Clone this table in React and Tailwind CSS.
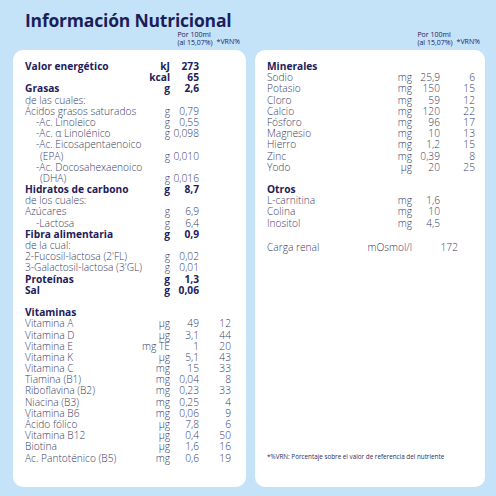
import React from 'react';

const FONT = { fontFamily: '"Open Sans", "Liberation Sans", sans-serif' };

// [label, unit, value, vrn, opts]
const macros = [
  ['Valor energético', 'kJ', '273', '', { b: true }],
  ['', 'kcal', '65', '', { b: true }],
  ['Grasas', 'g', '2,6', '', { b: true }],
  ['de las cuales:'],
  ['Ácidos grasos saturados', 'g', '0,79'],
  ['-Ac. Linoleico', 'g', '0,55', '', { i: 1 }],
  ['-Ac. α Linolénico', 'g', '0,098', '', { i: 1 }],
  ['-Ac. Eicosapentaenoico', '', '', '', { i: 1 }],
  ['(EPA)', 'g', '0,010', '', { i: 2 }],
  ['-Ac. Docosahexaenoico', '', '', '', { i: 1 }],
  ['(DHA)', 'g', '0,016', '', { i: 2 }],
  ['Hidratos de carbono', 'g', '8,7', '', { b: true }],
  ['de los cuales:'],
  ['Azúcares', 'g', '6,9'],
  ['-Lactosa', 'g', '6,4', '', { i: 1 }],
  ['Fibra alimentaria', 'g', '0,9', '', { b: true }],
  ['de la cual:'],
  ['2-Fucosil-lactosa (2\'FL)', 'g', '0,02'],
  ['3-Galactosil-lactosa (3\'GL)', 'g', '0,01'],
  ['Proteínas', 'g', '1,3', '', { b: true }],
  ['Sal', 'g', '0,06', '', { b: true }],
];

const vitamins = [
  ['Vitamina A', 'µg', '49', '12'],
  ['Vitamina D', 'µg', '3,1', '44'],
  ['Vitamina E', 'mg TE', '1', '20'],
  ['Vitamina K', 'µg', '5,1', '43'],
  ['Vitamina C', 'mg', '15', '33'],
  ['Tiamina (B1)', 'mg', '0,04', '8'],
  ['Riboflavina (B2)', 'mg', '0,23', '33'],
  ['Niacina (B3)', 'mg', '0,25', '4'],
  ['Vitamina B6', 'mg', '0,06', '9'],
  ['Ácido fólico', 'µg', '7,8', '6'],
  ['Vitamina B12', 'µg', '0,4', '50'],
  ['Biotina', 'µg', '1,6', '16'],
  ['Ac. Pantoténico (B5)', 'mg', '0,6', '19'],
];

const minerals = [
  ['Sodio', 'mg', '25,9', '6'],
  ['Potasio', 'mg', '150', '15'],
  ['Cloro', 'mg', '59', '12'],
  ['Calcio', 'mg', '120', '22'],
  ['Fósforo', 'mg', '96', '17'],
  ['Magnesio', 'mg', '10', '13'],
  ['Hierro', 'mg', '1,2', '15'],
  ['Zinc', 'mg', '0,39', '8'],
  ['Yodo', 'µg', '20', '25'],
];

const others = [
  ['L-carnitina', 'mg', '1,6', ''],
  ['Colina', 'mg', '10', ''],
  ['Inositol', 'mg', '4,5', ''],
];

function Row({ label, unit, value, vrn, opts = {}, right }) {
  const indent = opts.i === 1 ? 'pl-[11px]' : opts.i === 2 ? 'pl-[15px]' : '';
  const weight = opts.b ? 'font-bold text-[#1d2059]' : 'font-light text-[#383c66]';
  return (
    <div className={`flex h-[11.2px] leading-[11.2px] whitespace-nowrap ${weight}`}>
      <span className={`flex-1 min-w-0 ${indent}`}>{label}</span>
      <span className="w-[32px] text-right">{unit}</span>
      <span className={right ? 'w-[28px] text-right' : 'w-[29px] text-right'}>{value}</span>
      <span className={right ? 'w-[35px] text-right' : 'w-[32px] text-right'}>{vrn}</span>
    </div>
  );
}

function ColHeader() {
  return (
    <div className="h-[20px] flex items-end justify-end text-[#1d2059] text-[7px] leading-[8px] pb-[3px]">
      <div className="flex flex-col">
        <span>Por 100ml</span>
        <span>(al 15,07%)</span>
      </div>
      <span className="ml-[4px] mb-[1px]">*VRN%</span>
    </div>
  );
}

export default function App() {
  return (
    <div className="w-[496px] h-[496px] bg-[#c5e3f8] flex flex-col pl-[13px] pr-[11px] pb-[9px]" style={FONT}>
      <h1 className="pl-[12px] pt-[10px] h-[30px] text-[17.5px] leading-[20px] font-bold text-[#1b1e5b] tracking-[-0.2px]">
        Información Nutricional
      </h1>
      <div className="flex-1 flex gap-[9px]">
        {/* left column */}
        <div className="w-[233px] flex flex-col">
          <div className="pr-[6px]"><ColHeader /></div>
          <div className="flex-1 bg-white rounded-[10px] pl-[12px] pr-[15px] pt-[11px] text-[10.2px]">
            {macros.map((r, i) => (
              <Row key={i} label={r[0]} unit={r[1]} value={r[2]} vrn={r[3]} opts={r[4]} />
            ))}
            <div className="h-[11.2px]" />
            <Row label="Vitaminas" opts={{ b: true }} />
            {vitamins.map((r, i) => (
              <Row key={i} label={r[0]} unit={r[1]} value={r[2]} vrn={r[3]} />
            ))}
          </div>
        </div>
        {/* right column */}
        <div className="w-[230px] flex flex-col">
          <div className="pr-[5px]"><ColHeader /></div>
          <div className="flex-1 bg-white rounded-[10px] pl-[12px] pr-[10px] pt-[11px] text-[10.2px] flex flex-col">
            <Row label="Minerales" opts={{ b: true }} right />
            {minerals.map((r, i) => (
              <Row key={i} label={r[0]} unit={r[1]} value={r[2]} vrn={r[3]} right />
            ))}
            <div className="h-[11.2px]" />
            <Row label="Otros" opts={{ b: true }} right />
            {others.map((r, i) => (
              <Row key={i} label={r[0]} unit={r[1]} value={r[2]} vrn={r[3]} right />
            ))}
            <div className="flex h-[11.2px] leading-[11.2px] mt-[13px] whitespace-nowrap font-light text-[#383c66]">
              <span className="flex-1">Carga renal</span>
              <span className="text-right">mOsmol/l</span>
              <span className="w-[46px] text-right">172</span>
              <span className="w-[17px]" />
            </div>
            <div className="flex-1" />
            <p className="text-[6.3px] leading-[8px] text-[#2a2d5e] mb-[26px] whitespace-nowrap">
              *%VRN: Porcentaje sobre el valor de referencia del nutriente
            </p>
          </div>
        </div>
      </div>
    </div>
  );
}
